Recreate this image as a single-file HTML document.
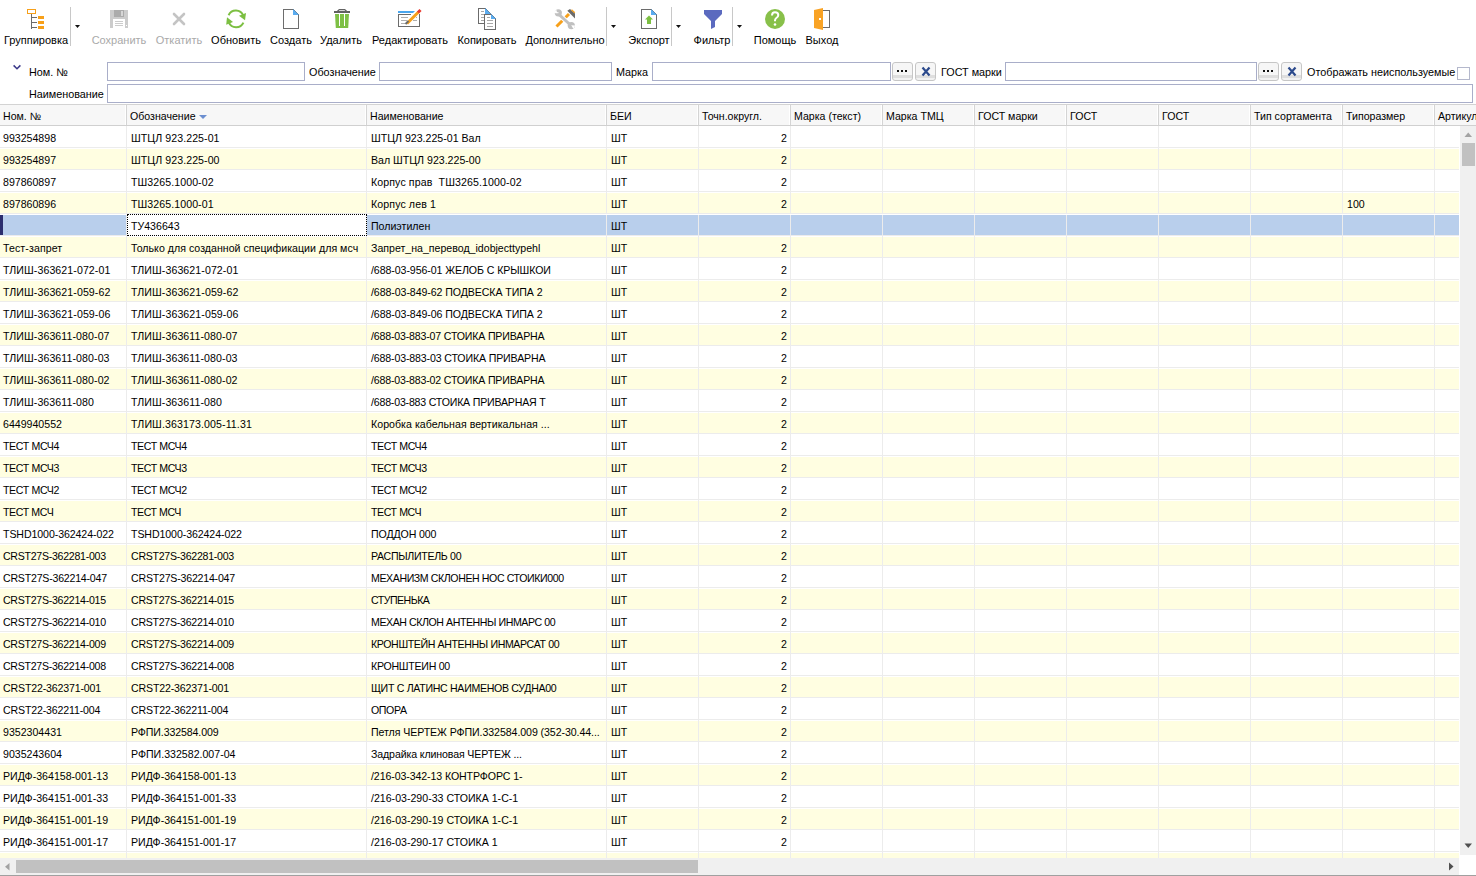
<!DOCTYPE html>
<html><head><meta charset="utf-8">
<style>
*{box-sizing:border-box;margin:0;padding:0}
html,body{width:1476px;height:876px;overflow:hidden;background:#fff}
body{position:relative;font-family:"Liberation Sans",sans-serif;font-size:10.6px;color:#000}
.abs{position:absolute}
.tl{position:absolute;top:34px;height:13px;line-height:13px;font-size:11px;text-align:center;white-space:nowrap;width:120px;color:#000}
.tl.dis{color:#a9a9a9}
.lbl{position:absolute;height:13px;line-height:13px;white-space:nowrap;font-size:10.8px}
.inp{position:absolute;border:1px solid #a9aec9;background:#fff;height:19px}
.btn{position:absolute;top:62px;height:19px;width:21px;border:1px solid #c6c6c6;border-radius:3px;background:linear-gradient(#f6f6f6 0,#f6f6f6 12px,#dedede 12px,#dedede 15px,#f2f2f2 15px)}
#grid{position:absolute;left:0;top:104px;width:1476px;height:754px;overflow:hidden}
.hdr{position:absolute;left:0;top:0;width:1476px;height:22px;background:#f7f7f7;border-top:1px solid #d3d3d3;border-bottom:1px solid #d0d0d0}
.hc{position:absolute;top:0;height:20px;line-height:22px;padding-left:3px;white-space:nowrap;overflow:hidden;border-right:1px solid #d4d4d4;box-shadow:inset -1px 0 0 #fff}
.sort{display:inline-block;width:0;height:0;border-left:4px solid transparent;border-right:4px solid transparent;border-top:4px solid #6c8fd0;margin-left:3px;vertical-align:1px}
.row{position:absolute;left:0;width:1459px;height:22px;background:#fff;border-bottom:1px solid #ececec}
.row.alt{background:#fffee1}
.row.alt .c{box-shadow:inset 0 1px 0 #fff}
.c{position:absolute;top:0;height:21px;line-height:25px;padding-left:3px;white-space:nowrap;overflow:hidden;border-right:1px solid #ececec}
.c.r{text-align:right;padding-right:3px;padding-left:0}
.row.sel{background:#fff}
.row.sel .c{background:#b9cfec;top:1px;height:20px;line-height:23px}
.row.sel .c:first-child{box-shadow:inset 3px 0 0 #2b2e6e}
.row.sel .c:nth-child(2){background:#fff;outline:1px dotted #000;outline-offset:-1px;top:0;height:22px;line-height:25px}
</style></head><body>

<!-- TOOLBAR ICONS -->
<svg class="abs" style="left:0;top:0" width="1476" height="56" viewBox="0 0 1476 56" shape-rendering="crispEdges">
 <!-- grouping -->
 <rect x="27.5" y="9.5" width="8" height="4" fill="none" stroke="#f7a01a"/>
 <path d="M31.5 14V29M31 17.5H37M31 22.5H37M31 27.5H37" stroke="#6b6b6b" fill="none"/>
 <rect x="38" y="16" width="6" height="3" fill="#f7a01a"/>
 <rect x="38" y="21" width="6" height="3" fill="#f7a01a"/>
 <rect x="38" y="26" width="6" height="3" fill="#f7a01a"/>
 <rect x="70" y="7" width="1" height="39" fill="#c8c8c8"/>
 <path d="M75 25H80L77.5 28Z" fill="#111" shape-rendering="auto"/>
 <!-- save (disabled) -->
 <path d="M110 10H127L128 11V28H110Z" fill="#cccccc"/>
 <rect x="114" y="10" width="10" height="7" fill="#ababab"/>
 <rect x="121" y="11" width="2" height="5" fill="#d6d6d6"/>
 <rect x="113" y="19" width="12" height="9" fill="#fff"/>
 <path d="M115 21.5H123M115 23.5H123M115 25.5H123" stroke="#cccccc"/>
 <rect x="126" y="25" width="1" height="1" fill="#fff"/>
 <!-- cancel (disabled) -->
 <path d="M174 14L184 24M184 14L174 24" stroke="#c4c4c4" stroke-width="2.6" stroke-linecap="round" shape-rendering="auto"/>
 <!-- refresh -->
 <g shape-rendering="auto" fill="#7cbf42">
  <path d="M228.6 15.2A8 8 0 0 1 243.25 15.6" fill="none" stroke="#7cbf42" stroke-width="2"/>
  <path d="M239 15.8L246 13L245 20.3Z"/>
  <path d="M243.4 22.6A8 8 0 0 1 228.75 22.4" fill="none" stroke="#7cbf42" stroke-width="2"/>
  <path d="M226.2 24.8L227 17.3L233 22Z"/>
 </g>
 <!-- new -->
 <path d="M283.5 28.5V9.5H293L298.5 15V28.5Z" fill="#fff" stroke="#6d6d6d"/>
 <path d="M293 9L299 15H293Z" fill="#5aacf0" shape-rendering="auto"/>
 <!-- trash -->
 <rect x="334" y="11" width="16" height="2" fill="#626262"/>
 <path d="M337.3 11.5L339.3 9.6H344.7L346.7 11.5" fill="none" stroke="#626262" stroke-width="1.3" shape-rendering="auto"/>
 <path d="M335 14H349L348.2 28H335.8Z" fill="#7ec045" shape-rendering="auto"/>
 <rect x="339" y="14" width="1" height="12" fill="#fff"/>
 <rect x="344" y="14" width="1" height="12" fill="#fff"/>
 <!-- edit -->
 <path d="M398 11H415L413 13H398Z" fill="#4aa6ee" shape-rendering="auto"/>
 <path d="M411 14.5H398.5V26.5H419.5V14" fill="none" stroke="#6b6b6b"/>
 <path d="M401 17.5H408M401 20.5H407M401 23.5H405M416 17.5H417M413 20.5H417" stroke="#b0b0b0"/>
 <g shape-rendering="auto">
  <path d="M407 23.5L418.5 12" stroke="#f7a01a" stroke-width="3"/>
  <path d="M418 12.5L420.5 10" stroke="#e8392f" stroke-width="3"/>
  <path d="M405.5 24L408.5 21" stroke="#6b6b6b" stroke-width="2"/>
 </g>
 <!-- copy -->
 <path d="M478.5 23.5V8.5H485L490.5 14V23.5Z" fill="#fff" stroke="#6b6b6b"/>
 <path d="M485 8L491 14H485Z" fill="#5aacf0" shape-rendering="auto"/>
 <path d="M481 11.5H484M481 14.5H484M481 17.5H484M481 20.5H484" stroke="#a8a8a8"/>
 <path d="M484.5 29.5V14.5H491L495.5 19V29.5Z" fill="#fff" stroke="#6b6b6b"/>
 <path d="M491 14L496 19H491Z" fill="#5aacf0" shape-rendering="auto"/>
 <path d="M487 17.5H490M487 20.5H493M487 23.5H493M487 26.5H493" stroke="#a8a8a8"/>
 <!-- tools -->
 <g shape-rendering="auto">
  <path d="M556.5 26.5L569 14" stroke="#f7a01a" stroke-width="3"/>
  <path d="M559 14.5L571 25.5" stroke="#fff" stroke-width="5"/>
  <path d="M559 14.5L571 25.5" stroke="#c0c0c0" stroke-width="3"/>
  <circle cx="558.3" cy="12.8" r="3.6" fill="#c0c0c0"/>
  <path d="M553.5 12.5L557.3 13.3L556.2 9.5Z" fill="#fff"/>
  <path d="M554 13.2H558.5V12.2H554Z" fill="#fff"/>
  <circle cx="571.3" cy="25.6" r="3.6" fill="#c0c0c0"/>
  <path d="M575.2 25.6L571.2 25.2L573.5 29Z" fill="#fff"/>
  <path d="M567.3 10.8L570 9L575 13.5L575 18.5Z" fill="#6b6b6b"/>
  <path d="M571.5 9.8L574.8 12.8" stroke="#f7a01a" stroke-width="1.2"/>
 </g>
 <rect x="606" y="7" width="1" height="39" fill="#c8c8c8"/>
 <path d="M611 25H616L613.5 28Z" fill="#111" shape-rendering="auto"/>
 <!-- export -->
 <path d="M641.5 28.5V9.5H651L656.5 15V28.5Z" fill="#fff" stroke="#6b6b6b"/>
 <path d="M651 9L657 15H651Z" fill="#5aacf0" shape-rendering="auto"/>
 <path d="M645 19.5L649 15.5L653 19.5H651V24H647V19.5Z" fill="#7cbf42" shape-rendering="auto"/>
 <rect x="671" y="7" width="1" height="39" fill="#c8c8c8"/>
 <path d="M676 25H681L678.5 28Z" fill="#111" shape-rendering="auto"/>
 <!-- filter -->
 <path d="M704 10H722V14L715 21V27L711 29V21L704 14Z" fill="#5b6abf" shape-rendering="auto"/>
 <rect x="732" y="7" width="1" height="39" fill="#c8c8c8"/>
 <path d="M737 25H742L739.5 28Z" fill="#111" shape-rendering="auto"/>
 <!-- help -->
 <g shape-rendering="auto">
  <circle cx="775" cy="19" r="10" fill="#88c04a"/>
  <path d="M772 15.5Q772 12.2 775 12.2Q778.3 12.2 778.3 15Q778.3 16.8 776.3 18Q775 18.8 775 20.5V21.2" fill="none" stroke="#fff" stroke-width="2"/>
  <circle cx="775" cy="24.5" r="1.3" fill="#fff"/>
 </g>
 <!-- exit -->
 <path d="M822 10.5H829.5V27.5H822" fill="none" stroke="#6b6b6b"/>
 <path d="M814 10L823 8V30L814 28Z" fill="#f9a325" shape-rendering="auto"/>
 <rect x="819" y="18" width="2" height="2" fill="#fff"/>
</svg>

<div class="tl" style="left:-24px">Группировка</div>
<div class="tl dis" style="left:59px">Сохранить</div>
<div class="tl dis" style="left:119px">Откатить</div>
<div class="tl" style="left:176px">Обновить</div>
<div class="tl" style="left:231px">Создать</div>
<div class="tl" style="left:281px">Удалить</div>
<div class="tl" style="left:350px">Редактировать</div>
<div class="tl" style="left:427px">Копировать</div>
<div class="tl" style="left:505px">Дополнительно</div>
<div class="tl" style="left:589px">Экспорт</div>
<div class="tl" style="left:652px">Фильтр</div>
<div class="tl" style="left:715px">Помощь</div>
<div class="tl" style="left:762px">Выход</div>

<!-- FILTER PANEL -->
<svg class="abs" style="left:12px;top:64px" width="11" height="8" viewBox="0 0 11 8"><path d="M1.6 1.4L5 4.8L8.4 1.4" fill="none" stroke="#3a3889" stroke-width="1.5"/></svg>
<div class="lbl" style="left:29px;top:66px">Ном. №</div>
<div class="inp" style="left:107px;top:62px;width:198px"></div>
<div class="lbl" style="left:309px;top:66px">Обозначение</div>
<div class="inp" style="left:379px;top:62px;width:233px"></div>
<div class="lbl" style="left:616px;top:66px">Марка</div>
<div class="inp" style="left:652px;top:62px;width:239px"></div>
<div class="btn" style="left:892px"></div>
<div class="btn" style="left:915px"></div>
<div class="lbl" style="left:941px;top:66px">ГОСТ марки</div>
<div class="inp" style="left:1005px;top:62px;width:252px"></div>
<div class="btn" style="left:1258px"></div>
<div class="btn" style="left:1281px"></div>
<div class="lbl" style="left:1307px;top:66px">Отображать неиспользуемые</div>
<div class="abs" style="left:1457px;top:67px;width:13px;height:13px;border:1px solid #b4b8cc;background:#fff"></div>
<div class="lbl" style="left:29px;top:88px">Наименование</div>
<div class="inp" style="left:107px;top:84px;width:1366px"></div>
<svg class="abs" style="left:0;top:60px" width="1476" height="24" viewBox="0 60 1476 24" shape-rendering="crispEdges">
 <rect x="897" y="70" width="2" height="2" fill="#111"/><rect x="901" y="70" width="2" height="2" fill="#111"/><rect x="905" y="70" width="2" height="2" fill="#111"/>
 <rect x="1263" y="70" width="2" height="2" fill="#111"/><rect x="1267" y="70" width="2" height="2" fill="#111"/><rect x="1271" y="70" width="2" height="2" fill="#111"/>
 <path d="M922.5 67.5L929.5 75.5M929.5 67.5L922.5 75.5" stroke="#2c4a8c" stroke-width="2.2" shape-rendering="auto"/>
 <path d="M1288.5 67.5L1295.5 75.5M1295.5 67.5L1288.5 75.5" stroke="#2c4a8c" stroke-width="2.2" shape-rendering="auto"/>
</svg>

<!-- GRID -->
<div id="grid">
<div class="hdr">
<div class="hc" style="left:0px;width:127px"><span>Ном. №</span></div>
<div class="hc" style="left:127px;width:240px"><span>Обозначение</span><span class="sort"></span></div>
<div class="hc" style="left:367px;width:240px"><span>Наименование</span></div>
<div class="hc" style="left:607px;width:92px"><span>БЕИ</span></div>
<div class="hc" style="left:699px;width:92px"><span>Точн.округл.</span></div>
<div class="hc" style="left:791px;width:92px"><span>Марка (текст)</span></div>
<div class="hc" style="left:883px;width:92px"><span>Марка ТМЦ</span></div>
<div class="hc" style="left:975px;width:92px"><span>ГОСТ марки</span></div>
<div class="hc" style="left:1067px;width:92px"><span>ГОСТ</span></div>
<div class="hc" style="left:1159px;width:92px"><span>ГОСТ</span></div>
<div class="hc" style="left:1251px;width:92px"><span>Тип сортамента</span></div>
<div class="hc" style="left:1343px;width:92px"><span>Типоразмер</span></div>
<div class="hc" style="left:1435px;width:92px"><span>Артикул</span></div>
</div>
<div id="rows" style="position:absolute;left:0;top:-104px">
<div class="row" style="top:126px">
<div class="c" style="left:0px;width:127px;padding-left:3px">993254898</div>
<div class="c" style="left:127px;width:240px;padding-left:4px;letter-spacing:0.071px">ШТЦЛ 923.225-01</div>
<div class="c" style="left:367px;width:240px;padding-left:4px">ШТЦЛ 923.225-01 Вал</div>
<div class="c" style="left:607px;width:92px;padding-left:4px">ШТ</div>
<div class="c r" style="left:699px;width:92px;padding-left:4px">2</div>
<div class="c" style="left:791px;width:92px;padding-left:4px"></div>
<div class="c" style="left:883px;width:92px;padding-left:4px"></div>
<div class="c" style="left:975px;width:92px;padding-left:4px"></div>
<div class="c" style="left:1067px;width:92px;padding-left:4px"></div>
<div class="c" style="left:1159px;width:92px;padding-left:4px"></div>
<div class="c" style="left:1251px;width:92px;padding-left:4px"></div>
<div class="c" style="left:1343px;width:92px;padding-left:4px"></div>
<div class="c" style="left:1435px;width:24px;padding-left:4px;border-right:0"></div>
</div>
<div class="row alt" style="top:148px">
<div class="c" style="left:0px;width:127px;padding-left:3px">993254897</div>
<div class="c" style="left:127px;width:240px;padding-left:4px;letter-spacing:0.071px">ШТЦЛ 923.225-00</div>
<div class="c" style="left:367px;width:240px;padding-left:4px">Вал ШТЦЛ 923.225-00</div>
<div class="c" style="left:607px;width:92px;padding-left:4px">ШТ</div>
<div class="c r" style="left:699px;width:92px;padding-left:4px">2</div>
<div class="c" style="left:791px;width:92px;padding-left:4px"></div>
<div class="c" style="left:883px;width:92px;padding-left:4px"></div>
<div class="c" style="left:975px;width:92px;padding-left:4px"></div>
<div class="c" style="left:1067px;width:92px;padding-left:4px"></div>
<div class="c" style="left:1159px;width:92px;padding-left:4px"></div>
<div class="c" style="left:1251px;width:92px;padding-left:4px"></div>
<div class="c" style="left:1343px;width:92px;padding-left:4px"></div>
<div class="c" style="left:1435px;width:24px;padding-left:4px;border-right:0"></div>
</div>
<div class="row" style="top:170px">
<div class="c" style="left:0px;width:127px;padding-left:3px">897860897</div>
<div class="c" style="left:127px;width:240px;padding-left:4px;letter-spacing:0.077px">ТШ3265.1000-02</div>
<div class="c" style="left:367px;width:240px;padding-left:4px;letter-spacing:0.108px">Корпус прав&nbsp; ТШ3265.1000-02</div>
<div class="c" style="left:607px;width:92px;padding-left:4px">ШТ</div>
<div class="c r" style="left:699px;width:92px;padding-left:4px">2</div>
<div class="c" style="left:791px;width:92px;padding-left:4px"></div>
<div class="c" style="left:883px;width:92px;padding-left:4px"></div>
<div class="c" style="left:975px;width:92px;padding-left:4px"></div>
<div class="c" style="left:1067px;width:92px;padding-left:4px"></div>
<div class="c" style="left:1159px;width:92px;padding-left:4px"></div>
<div class="c" style="left:1251px;width:92px;padding-left:4px"></div>
<div class="c" style="left:1343px;width:92px;padding-left:4px"></div>
<div class="c" style="left:1435px;width:24px;padding-left:4px;border-right:0"></div>
</div>
<div class="row alt" style="top:192px">
<div class="c" style="left:0px;width:127px;padding-left:3px">897860896</div>
<div class="c" style="left:127px;width:240px;padding-left:4px;letter-spacing:0.077px">ТШ3265.1000-01</div>
<div class="c" style="left:367px;width:240px;padding-left:4px;letter-spacing:0.109px">Корпус лев 1</div>
<div class="c" style="left:607px;width:92px;padding-left:4px">ШТ</div>
<div class="c r" style="left:699px;width:92px;padding-left:4px">2</div>
<div class="c" style="left:791px;width:92px;padding-left:4px"></div>
<div class="c" style="left:883px;width:92px;padding-left:4px"></div>
<div class="c" style="left:975px;width:92px;padding-left:4px"></div>
<div class="c" style="left:1067px;width:92px;padding-left:4px"></div>
<div class="c" style="left:1159px;width:92px;padding-left:4px"></div>
<div class="c" style="left:1251px;width:92px;padding-left:4px"></div>
<div class="c" style="left:1343px;width:92px;padding-left:4px">100</div>
<div class="c" style="left:1435px;width:24px;padding-left:4px;border-right:0"></div>
</div>
<div class="row sel" style="top:214px">
<div class="c" style="left:0px;width:127px;padding-left:3px"></div>
<div class="c" style="left:127px;width:240px;padding-left:4px">ТУ436643</div>
<div class="c" style="left:367px;width:240px;padding-left:4px">Полиэтилен</div>
<div class="c" style="left:607px;width:92px;padding-left:4px">ШТ</div>
<div class="c r" style="left:699px;width:92px;padding-left:4px"></div>
<div class="c" style="left:791px;width:92px;padding-left:4px"></div>
<div class="c" style="left:883px;width:92px;padding-left:4px"></div>
<div class="c" style="left:975px;width:92px;padding-left:4px"></div>
<div class="c" style="left:1067px;width:92px;padding-left:4px"></div>
<div class="c" style="left:1159px;width:92px;padding-left:4px"></div>
<div class="c" style="left:1251px;width:92px;padding-left:4px"></div>
<div class="c" style="left:1343px;width:92px;padding-left:4px"></div>
<div class="c" style="left:1435px;width:24px;padding-left:4px;border-right:0"></div>
</div>
<div class="row alt" style="top:236px">
<div class="c" style="left:0px;width:127px;padding-left:3px;letter-spacing:0.1px">Тест-запрет</div>
<div class="c" style="left:127px;width:240px;padding-left:4px;letter-spacing:0.025px">Только для созданной спецификации для мсч</div>
<div class="c" style="left:367px;width:240px;padding-left:4px">Запрет_на_перевод_idobjecttypehl</div>
<div class="c" style="left:607px;width:92px;padding-left:4px">ШТ</div>
<div class="c r" style="left:699px;width:92px;padding-left:4px">2</div>
<div class="c" style="left:791px;width:92px;padding-left:4px"></div>
<div class="c" style="left:883px;width:92px;padding-left:4px"></div>
<div class="c" style="left:975px;width:92px;padding-left:4px"></div>
<div class="c" style="left:1067px;width:92px;padding-left:4px"></div>
<div class="c" style="left:1159px;width:92px;padding-left:4px"></div>
<div class="c" style="left:1251px;width:92px;padding-left:4px"></div>
<div class="c" style="left:1343px;width:92px;padding-left:4px"></div>
<div class="c" style="left:1435px;width:24px;padding-left:4px;border-right:0"></div>
</div>
<div class="row" style="top:258px">
<div class="c" style="left:0px;width:127px;padding-left:3px;letter-spacing:0.082px">ТЛИШ-363621-072-01</div>
<div class="c" style="left:127px;width:240px;padding-left:4px;letter-spacing:0.082px">ТЛИШ-363621-072-01</div>
<div class="c" style="left:367px;width:240px;padding-left:4px;letter-spacing:-0.076px">/688-03-956-01 ЖЕЛОБ С КРЫШКОИ</div>
<div class="c" style="left:607px;width:92px;padding-left:4px">ШТ</div>
<div class="c r" style="left:699px;width:92px;padding-left:4px">2</div>
<div class="c" style="left:791px;width:92px;padding-left:4px"></div>
<div class="c" style="left:883px;width:92px;padding-left:4px"></div>
<div class="c" style="left:975px;width:92px;padding-left:4px"></div>
<div class="c" style="left:1067px;width:92px;padding-left:4px"></div>
<div class="c" style="left:1159px;width:92px;padding-left:4px"></div>
<div class="c" style="left:1251px;width:92px;padding-left:4px"></div>
<div class="c" style="left:1343px;width:92px;padding-left:4px"></div>
<div class="c" style="left:1435px;width:24px;padding-left:4px;border-right:0"></div>
</div>
<div class="row alt" style="top:280px">
<div class="c" style="left:0px;width:127px;padding-left:3px;letter-spacing:0.082px">ТЛИШ-363621-059-62</div>
<div class="c" style="left:127px;width:240px;padding-left:4px;letter-spacing:0.082px">ТЛИШ-363621-059-62</div>
<div class="c" style="left:367px;width:240px;padding-left:4px;letter-spacing:-0.076px">/688-03-849-62 ПОДВЕСКА ТИПА 2</div>
<div class="c" style="left:607px;width:92px;padding-left:4px">ШТ</div>
<div class="c r" style="left:699px;width:92px;padding-left:4px">2</div>
<div class="c" style="left:791px;width:92px;padding-left:4px"></div>
<div class="c" style="left:883px;width:92px;padding-left:4px"></div>
<div class="c" style="left:975px;width:92px;padding-left:4px"></div>
<div class="c" style="left:1067px;width:92px;padding-left:4px"></div>
<div class="c" style="left:1159px;width:92px;padding-left:4px"></div>
<div class="c" style="left:1251px;width:92px;padding-left:4px"></div>
<div class="c" style="left:1343px;width:92px;padding-left:4px"></div>
<div class="c" style="left:1435px;width:24px;padding-left:4px;border-right:0"></div>
</div>
<div class="row" style="top:302px">
<div class="c" style="left:0px;width:127px;padding-left:3px;letter-spacing:0.082px">ТЛИШ-363621-059-06</div>
<div class="c" style="left:127px;width:240px;padding-left:4px;letter-spacing:0.082px">ТЛИШ-363621-059-06</div>
<div class="c" style="left:367px;width:240px;padding-left:4px;letter-spacing:-0.076px">/688-03-849-06 ПОДВЕСКА ТИПА 2</div>
<div class="c" style="left:607px;width:92px;padding-left:4px">ШТ</div>
<div class="c r" style="left:699px;width:92px;padding-left:4px">2</div>
<div class="c" style="left:791px;width:92px;padding-left:4px"></div>
<div class="c" style="left:883px;width:92px;padding-left:4px"></div>
<div class="c" style="left:975px;width:92px;padding-left:4px"></div>
<div class="c" style="left:1067px;width:92px;padding-left:4px"></div>
<div class="c" style="left:1159px;width:92px;padding-left:4px"></div>
<div class="c" style="left:1251px;width:92px;padding-left:4px"></div>
<div class="c" style="left:1343px;width:92px;padding-left:4px"></div>
<div class="c" style="left:1435px;width:24px;padding-left:4px;border-right:0"></div>
</div>
<div class="row alt" style="top:324px">
<div class="c" style="left:0px;width:127px;padding-left:3px;letter-spacing:0.082px">ТЛИШ-363611-080-07</div>
<div class="c" style="left:127px;width:240px;padding-left:4px;letter-spacing:0.082px">ТЛИШ-363611-080-07</div>
<div class="c" style="left:367px;width:240px;padding-left:4px;letter-spacing:-0.172px">/688-03-883-07 СТОИКА ПРИВАРНА</div>
<div class="c" style="left:607px;width:92px;padding-left:4px">ШТ</div>
<div class="c r" style="left:699px;width:92px;padding-left:4px">2</div>
<div class="c" style="left:791px;width:92px;padding-left:4px"></div>
<div class="c" style="left:883px;width:92px;padding-left:4px"></div>
<div class="c" style="left:975px;width:92px;padding-left:4px"></div>
<div class="c" style="left:1067px;width:92px;padding-left:4px"></div>
<div class="c" style="left:1159px;width:92px;padding-left:4px"></div>
<div class="c" style="left:1251px;width:92px;padding-left:4px"></div>
<div class="c" style="left:1343px;width:92px;padding-left:4px"></div>
<div class="c" style="left:1435px;width:24px;padding-left:4px;border-right:0"></div>
</div>
<div class="row" style="top:346px">
<div class="c" style="left:0px;width:127px;padding-left:3px;letter-spacing:0.082px">ТЛИШ-363611-080-03</div>
<div class="c" style="left:127px;width:240px;padding-left:4px;letter-spacing:0.082px">ТЛИШ-363611-080-03</div>
<div class="c" style="left:367px;width:240px;padding-left:4px;letter-spacing:-0.138px">/688-03-883-03 СТОИКА ПРИВАРНА</div>
<div class="c" style="left:607px;width:92px;padding-left:4px">ШТ</div>
<div class="c r" style="left:699px;width:92px;padding-left:4px">2</div>
<div class="c" style="left:791px;width:92px;padding-left:4px"></div>
<div class="c" style="left:883px;width:92px;padding-left:4px"></div>
<div class="c" style="left:975px;width:92px;padding-left:4px"></div>
<div class="c" style="left:1067px;width:92px;padding-left:4px"></div>
<div class="c" style="left:1159px;width:92px;padding-left:4px"></div>
<div class="c" style="left:1251px;width:92px;padding-left:4px"></div>
<div class="c" style="left:1343px;width:92px;padding-left:4px"></div>
<div class="c" style="left:1435px;width:24px;padding-left:4px;border-right:0"></div>
</div>
<div class="row alt" style="top:368px">
<div class="c" style="left:0px;width:127px;padding-left:3px;letter-spacing:0.082px">ТЛИШ-363611-080-02</div>
<div class="c" style="left:127px;width:240px;padding-left:4px;letter-spacing:0.082px">ТЛИШ-363611-080-02</div>
<div class="c" style="left:367px;width:240px;padding-left:4px;letter-spacing:-0.172px">/688-03-883-02 СТОИКА ПРИВАРНА</div>
<div class="c" style="left:607px;width:92px;padding-left:4px">ШТ</div>
<div class="c r" style="left:699px;width:92px;padding-left:4px">2</div>
<div class="c" style="left:791px;width:92px;padding-left:4px"></div>
<div class="c" style="left:883px;width:92px;padding-left:4px"></div>
<div class="c" style="left:975px;width:92px;padding-left:4px"></div>
<div class="c" style="left:1067px;width:92px;padding-left:4px"></div>
<div class="c" style="left:1159px;width:92px;padding-left:4px"></div>
<div class="c" style="left:1251px;width:92px;padding-left:4px"></div>
<div class="c" style="left:1343px;width:92px;padding-left:4px"></div>
<div class="c" style="left:1435px;width:24px;padding-left:4px;border-right:0"></div>
</div>
<div class="row" style="top:390px">
<div class="c" style="left:0px;width:127px;padding-left:3px;letter-spacing:0.071px">ТЛИШ-363611-080</div>
<div class="c" style="left:127px;width:240px;padding-left:4px;letter-spacing:0.071px">ТЛИШ-363611-080</div>
<div class="c" style="left:367px;width:240px;padding-left:4px;letter-spacing:-0.193px">/688-03-883 СТОИКА ПРИВАРНАЯ Т</div>
<div class="c" style="left:607px;width:92px;padding-left:4px">ШТ</div>
<div class="c r" style="left:699px;width:92px;padding-left:4px">2</div>
<div class="c" style="left:791px;width:92px;padding-left:4px"></div>
<div class="c" style="left:883px;width:92px;padding-left:4px"></div>
<div class="c" style="left:975px;width:92px;padding-left:4px"></div>
<div class="c" style="left:1067px;width:92px;padding-left:4px"></div>
<div class="c" style="left:1159px;width:92px;padding-left:4px"></div>
<div class="c" style="left:1251px;width:92px;padding-left:4px"></div>
<div class="c" style="left:1343px;width:92px;padding-left:4px"></div>
<div class="c" style="left:1435px;width:24px;padding-left:4px;border-right:0"></div>
</div>
<div class="row alt" style="top:412px">
<div class="c" style="left:0px;width:127px;padding-left:3px">6449940552</div>
<div class="c" style="left:127px;width:240px;padding-left:4px;letter-spacing:0.105px">ТЛИШ.363173.005-11.31</div>
<div class="c" style="left:367px;width:240px;padding-left:4px;letter-spacing:0.036px">Коробка кабельная вертикальная ...</div>
<div class="c" style="left:607px;width:92px;padding-left:4px">ШТ</div>
<div class="c r" style="left:699px;width:92px;padding-left:4px">2</div>
<div class="c" style="left:791px;width:92px;padding-left:4px"></div>
<div class="c" style="left:883px;width:92px;padding-left:4px"></div>
<div class="c" style="left:975px;width:92px;padding-left:4px"></div>
<div class="c" style="left:1067px;width:92px;padding-left:4px"></div>
<div class="c" style="left:1159px;width:92px;padding-left:4px"></div>
<div class="c" style="left:1251px;width:92px;padding-left:4px"></div>
<div class="c" style="left:1343px;width:92px;padding-left:4px"></div>
<div class="c" style="left:1435px;width:24px;padding-left:4px;border-right:0"></div>
</div>
<div class="row" style="top:434px">
<div class="c" style="left:0px;width:127px;padding-left:3px;letter-spacing:-0.362px">ТЕСТ МСЧ4</div>
<div class="c" style="left:127px;width:240px;padding-left:4px;letter-spacing:-0.4px">ТЕСТ МСЧ4</div>
<div class="c" style="left:367px;width:240px;padding-left:4px;letter-spacing:-0.4px">ТЕСТ МСЧ4</div>
<div class="c" style="left:607px;width:92px;padding-left:4px">ШТ</div>
<div class="c r" style="left:699px;width:92px;padding-left:4px">2</div>
<div class="c" style="left:791px;width:92px;padding-left:4px"></div>
<div class="c" style="left:883px;width:92px;padding-left:4px"></div>
<div class="c" style="left:975px;width:92px;padding-left:4px"></div>
<div class="c" style="left:1067px;width:92px;padding-left:4px"></div>
<div class="c" style="left:1159px;width:92px;padding-left:4px"></div>
<div class="c" style="left:1251px;width:92px;padding-left:4px"></div>
<div class="c" style="left:1343px;width:92px;padding-left:4px"></div>
<div class="c" style="left:1435px;width:24px;padding-left:4px;border-right:0"></div>
</div>
<div class="row alt" style="top:456px">
<div class="c" style="left:0px;width:127px;padding-left:3px;letter-spacing:-0.362px">ТЕСТ МСЧ3</div>
<div class="c" style="left:127px;width:240px;padding-left:4px;letter-spacing:-0.4px">ТЕСТ МСЧ3</div>
<div class="c" style="left:367px;width:240px;padding-left:4px;letter-spacing:-0.4px">ТЕСТ МСЧ3</div>
<div class="c" style="left:607px;width:92px;padding-left:4px">ШТ</div>
<div class="c r" style="left:699px;width:92px;padding-left:4px">2</div>
<div class="c" style="left:791px;width:92px;padding-left:4px"></div>
<div class="c" style="left:883px;width:92px;padding-left:4px"></div>
<div class="c" style="left:975px;width:92px;padding-left:4px"></div>
<div class="c" style="left:1067px;width:92px;padding-left:4px"></div>
<div class="c" style="left:1159px;width:92px;padding-left:4px"></div>
<div class="c" style="left:1251px;width:92px;padding-left:4px"></div>
<div class="c" style="left:1343px;width:92px;padding-left:4px"></div>
<div class="c" style="left:1435px;width:24px;padding-left:4px;border-right:0"></div>
</div>
<div class="row" style="top:478px">
<div class="c" style="left:0px;width:127px;padding-left:3px;letter-spacing:-0.362px">ТЕСТ МСЧ2</div>
<div class="c" style="left:127px;width:240px;padding-left:4px;letter-spacing:-0.4px">ТЕСТ МСЧ2</div>
<div class="c" style="left:367px;width:240px;padding-left:4px;letter-spacing:-0.4px">ТЕСТ МСЧ2</div>
<div class="c" style="left:607px;width:92px;padding-left:4px">ШТ</div>
<div class="c r" style="left:699px;width:92px;padding-left:4px">2</div>
<div class="c" style="left:791px;width:92px;padding-left:4px"></div>
<div class="c" style="left:883px;width:92px;padding-left:4px"></div>
<div class="c" style="left:975px;width:92px;padding-left:4px"></div>
<div class="c" style="left:1067px;width:92px;padding-left:4px"></div>
<div class="c" style="left:1159px;width:92px;padding-left:4px"></div>
<div class="c" style="left:1251px;width:92px;padding-left:4px"></div>
<div class="c" style="left:1343px;width:92px;padding-left:4px"></div>
<div class="c" style="left:1435px;width:24px;padding-left:4px;border-right:0"></div>
</div>
<div class="row alt" style="top:500px">
<div class="c" style="left:0px;width:127px;padding-left:3px;letter-spacing:-0.386px">ТЕСТ МСЧ</div>
<div class="c" style="left:127px;width:240px;padding-left:4px;letter-spacing:-0.429px">ТЕСТ МСЧ</div>
<div class="c" style="left:367px;width:240px;padding-left:4px;letter-spacing:-0.414px">ТЕСТ МСЧ</div>
<div class="c" style="left:607px;width:92px;padding-left:4px">ШТ</div>
<div class="c r" style="left:699px;width:92px;padding-left:4px">2</div>
<div class="c" style="left:791px;width:92px;padding-left:4px"></div>
<div class="c" style="left:883px;width:92px;padding-left:4px"></div>
<div class="c" style="left:975px;width:92px;padding-left:4px"></div>
<div class="c" style="left:1067px;width:92px;padding-left:4px"></div>
<div class="c" style="left:1159px;width:92px;padding-left:4px"></div>
<div class="c" style="left:1251px;width:92px;padding-left:4px"></div>
<div class="c" style="left:1343px;width:92px;padding-left:4px"></div>
<div class="c" style="left:1435px;width:24px;padding-left:4px;border-right:0"></div>
</div>
<div class="row" style="top:522px">
<div class="c" style="left:0px;width:127px;padding-left:3px;letter-spacing:-0.089px">TSHD1000-362424-022</div>
<div class="c" style="left:127px;width:240px;padding-left:4px;letter-spacing:-0.089px">TSHD1000-362424-022</div>
<div class="c" style="left:367px;width:240px;padding-left:4px;letter-spacing:-0.111px">ПОДДОН 000</div>
<div class="c" style="left:607px;width:92px;padding-left:4px">ШТ</div>
<div class="c r" style="left:699px;width:92px;padding-left:4px">2</div>
<div class="c" style="left:791px;width:92px;padding-left:4px"></div>
<div class="c" style="left:883px;width:92px;padding-left:4px"></div>
<div class="c" style="left:975px;width:92px;padding-left:4px"></div>
<div class="c" style="left:1067px;width:92px;padding-left:4px"></div>
<div class="c" style="left:1159px;width:92px;padding-left:4px"></div>
<div class="c" style="left:1251px;width:92px;padding-left:4px"></div>
<div class="c" style="left:1343px;width:92px;padding-left:4px"></div>
<div class="c" style="left:1435px;width:24px;padding-left:4px;border-right:0"></div>
</div>
<div class="row alt" style="top:544px">
<div class="c" style="left:0px;width:127px;padding-left:3px;letter-spacing:-0.276px">CRST27S-362281-003</div>
<div class="c" style="left:127px;width:240px;padding-left:4px;letter-spacing:-0.271px">CRST27S-362281-003</div>
<div class="c" style="left:367px;width:240px;padding-left:4px;letter-spacing:-0.308px">РАСПЫЛИТЕЛЬ 00</div>
<div class="c" style="left:607px;width:92px;padding-left:4px">ШТ</div>
<div class="c r" style="left:699px;width:92px;padding-left:4px">2</div>
<div class="c" style="left:791px;width:92px;padding-left:4px"></div>
<div class="c" style="left:883px;width:92px;padding-left:4px"></div>
<div class="c" style="left:975px;width:92px;padding-left:4px"></div>
<div class="c" style="left:1067px;width:92px;padding-left:4px"></div>
<div class="c" style="left:1159px;width:92px;padding-left:4px"></div>
<div class="c" style="left:1251px;width:92px;padding-left:4px"></div>
<div class="c" style="left:1343px;width:92px;padding-left:4px"></div>
<div class="c" style="left:1435px;width:24px;padding-left:4px;border-right:0"></div>
</div>
<div class="row" style="top:566px">
<div class="c" style="left:0px;width:127px;padding-left:3px;letter-spacing:-0.218px">CRST27S-362214-047</div>
<div class="c" style="left:127px;width:240px;padding-left:4px;letter-spacing:-0.212px">CRST27S-362214-047</div>
<div class="c" style="left:367px;width:240px;padding-left:4px;letter-spacing:-0.407px">МЕХАНИЗМ СКЛОНЕН НОС СТОИКИ000</div>
<div class="c" style="left:607px;width:92px;padding-left:4px">ШТ</div>
<div class="c r" style="left:699px;width:92px;padding-left:4px">2</div>
<div class="c" style="left:791px;width:92px;padding-left:4px"></div>
<div class="c" style="left:883px;width:92px;padding-left:4px"></div>
<div class="c" style="left:975px;width:92px;padding-left:4px"></div>
<div class="c" style="left:1067px;width:92px;padding-left:4px"></div>
<div class="c" style="left:1159px;width:92px;padding-left:4px"></div>
<div class="c" style="left:1251px;width:92px;padding-left:4px"></div>
<div class="c" style="left:1343px;width:92px;padding-left:4px"></div>
<div class="c" style="left:1435px;width:24px;padding-left:4px;border-right:0"></div>
</div>
<div class="row alt" style="top:588px">
<div class="c" style="left:0px;width:127px;padding-left:3px;letter-spacing:-0.276px">CRST27S-362214-015</div>
<div class="c" style="left:127px;width:240px;padding-left:4px;letter-spacing:-0.271px">CRST27S-362214-015</div>
<div class="c" style="left:367px;width:240px;padding-left:4px;letter-spacing:-0.513px">СТУПЕНЬКА</div>
<div class="c" style="left:607px;width:92px;padding-left:4px">ШТ</div>
<div class="c r" style="left:699px;width:92px;padding-left:4px">2</div>
<div class="c" style="left:791px;width:92px;padding-left:4px"></div>
<div class="c" style="left:883px;width:92px;padding-left:4px"></div>
<div class="c" style="left:975px;width:92px;padding-left:4px"></div>
<div class="c" style="left:1067px;width:92px;padding-left:4px"></div>
<div class="c" style="left:1159px;width:92px;padding-left:4px"></div>
<div class="c" style="left:1251px;width:92px;padding-left:4px"></div>
<div class="c" style="left:1343px;width:92px;padding-left:4px"></div>
<div class="c" style="left:1435px;width:24px;padding-left:4px;border-right:0"></div>
</div>
<div class="row" style="top:610px">
<div class="c" style="left:0px;width:127px;padding-left:3px;letter-spacing:-0.276px">CRST27S-362214-010</div>
<div class="c" style="left:127px;width:240px;padding-left:4px;letter-spacing:-0.271px">CRST27S-362214-010</div>
<div class="c" style="left:367px;width:240px;padding-left:4px;letter-spacing:-0.429px">МЕХАН СКЛОН АНТЕННЫ ИНМАРС 00</div>
<div class="c" style="left:607px;width:92px;padding-left:4px">ШТ</div>
<div class="c r" style="left:699px;width:92px;padding-left:4px">2</div>
<div class="c" style="left:791px;width:92px;padding-left:4px"></div>
<div class="c" style="left:883px;width:92px;padding-left:4px"></div>
<div class="c" style="left:975px;width:92px;padding-left:4px"></div>
<div class="c" style="left:1067px;width:92px;padding-left:4px"></div>
<div class="c" style="left:1159px;width:92px;padding-left:4px"></div>
<div class="c" style="left:1251px;width:92px;padding-left:4px"></div>
<div class="c" style="left:1343px;width:92px;padding-left:4px"></div>
<div class="c" style="left:1435px;width:24px;padding-left:4px;border-right:0"></div>
</div>
<div class="row alt" style="top:632px">
<div class="c" style="left:0px;width:127px;padding-left:3px;letter-spacing:-0.276px">CRST27S-362214-009</div>
<div class="c" style="left:127px;width:240px;padding-left:4px;letter-spacing:-0.271px">CRST27S-362214-009</div>
<div class="c" style="left:367px;width:240px;padding-left:4px;letter-spacing:-0.379px">КРОНШТЕЙН АНТЕННЫ ИНМАРСАТ 00</div>
<div class="c" style="left:607px;width:92px;padding-left:4px">ШТ</div>
<div class="c r" style="left:699px;width:92px;padding-left:4px">2</div>
<div class="c" style="left:791px;width:92px;padding-left:4px"></div>
<div class="c" style="left:883px;width:92px;padding-left:4px"></div>
<div class="c" style="left:975px;width:92px;padding-left:4px"></div>
<div class="c" style="left:1067px;width:92px;padding-left:4px"></div>
<div class="c" style="left:1159px;width:92px;padding-left:4px"></div>
<div class="c" style="left:1251px;width:92px;padding-left:4px"></div>
<div class="c" style="left:1343px;width:92px;padding-left:4px"></div>
<div class="c" style="left:1435px;width:24px;padding-left:4px;border-right:0"></div>
</div>
<div class="row" style="top:654px">
<div class="c" style="left:0px;width:127px;padding-left:3px;letter-spacing:-0.276px">CRST27S-362214-008</div>
<div class="c" style="left:127px;width:240px;padding-left:4px;letter-spacing:-0.271px">CRST27S-362214-008</div>
<div class="c" style="left:367px;width:240px;padding-left:4px;letter-spacing:-0.264px">КРОНШТЕИН 00</div>
<div class="c" style="left:607px;width:92px;padding-left:4px">ШТ</div>
<div class="c r" style="left:699px;width:92px;padding-left:4px">2</div>
<div class="c" style="left:791px;width:92px;padding-left:4px"></div>
<div class="c" style="left:883px;width:92px;padding-left:4px"></div>
<div class="c" style="left:975px;width:92px;padding-left:4px"></div>
<div class="c" style="left:1067px;width:92px;padding-left:4px"></div>
<div class="c" style="left:1159px;width:92px;padding-left:4px"></div>
<div class="c" style="left:1251px;width:92px;padding-left:4px"></div>
<div class="c" style="left:1343px;width:92px;padding-left:4px"></div>
<div class="c" style="left:1435px;width:24px;padding-left:4px;border-right:0"></div>
</div>
<div class="row alt" style="top:676px">
<div class="c" style="left:0px;width:127px;padding-left:3px;letter-spacing:-0.156px">CRST22-362371-001</div>
<div class="c" style="left:127px;width:240px;padding-left:4px;letter-spacing:-0.162px">CRST22-362371-001</div>
<div class="c" style="left:367px;width:240px;padding-left:4px;letter-spacing:-0.311px">ЩИТ С ЛАТИНС НАИМЕНОВ СУДНА00</div>
<div class="c" style="left:607px;width:92px;padding-left:4px">ШТ</div>
<div class="c r" style="left:699px;width:92px;padding-left:4px">2</div>
<div class="c" style="left:791px;width:92px;padding-left:4px"></div>
<div class="c" style="left:883px;width:92px;padding-left:4px"></div>
<div class="c" style="left:975px;width:92px;padding-left:4px"></div>
<div class="c" style="left:1067px;width:92px;padding-left:4px"></div>
<div class="c" style="left:1159px;width:92px;padding-left:4px"></div>
<div class="c" style="left:1251px;width:92px;padding-left:4px"></div>
<div class="c" style="left:1343px;width:92px;padding-left:4px"></div>
<div class="c" style="left:1435px;width:24px;padding-left:4px;border-right:0"></div>
</div>
<div class="row" style="top:698px">
<div class="c" style="left:0px;width:127px;padding-left:3px;letter-spacing:-0.156px">CRST22-362211-004</div>
<div class="c" style="left:127px;width:240px;padding-left:4px;letter-spacing:-0.162px">CRST22-362211-004</div>
<div class="c" style="left:367px;width:240px;padding-left:4px;letter-spacing:-0.375px">ОПОРА</div>
<div class="c" style="left:607px;width:92px;padding-left:4px">ШТ</div>
<div class="c r" style="left:699px;width:92px;padding-left:4px">2</div>
<div class="c" style="left:791px;width:92px;padding-left:4px"></div>
<div class="c" style="left:883px;width:92px;padding-left:4px"></div>
<div class="c" style="left:975px;width:92px;padding-left:4px"></div>
<div class="c" style="left:1067px;width:92px;padding-left:4px"></div>
<div class="c" style="left:1159px;width:92px;padding-left:4px"></div>
<div class="c" style="left:1251px;width:92px;padding-left:4px"></div>
<div class="c" style="left:1343px;width:92px;padding-left:4px"></div>
<div class="c" style="left:1435px;width:24px;padding-left:4px;border-right:0"></div>
</div>
<div class="row alt" style="top:720px">
<div class="c" style="left:0px;width:127px;padding-left:3px">9352304431</div>
<div class="c" style="left:127px;width:240px;padding-left:4px;letter-spacing:-0.107px">РФПИ.332584.009</div>
<div class="c" style="left:367px;width:240px;padding-left:4px;letter-spacing:-0.073px">Петля ЧЕРТЕЖ РФПИ.332584.009 (352-30.44...</div>
<div class="c" style="left:607px;width:92px;padding-left:4px">ШТ</div>
<div class="c r" style="left:699px;width:92px;padding-left:4px">2</div>
<div class="c" style="left:791px;width:92px;padding-left:4px"></div>
<div class="c" style="left:883px;width:92px;padding-left:4px"></div>
<div class="c" style="left:975px;width:92px;padding-left:4px"></div>
<div class="c" style="left:1067px;width:92px;padding-left:4px"></div>
<div class="c" style="left:1159px;width:92px;padding-left:4px"></div>
<div class="c" style="left:1251px;width:92px;padding-left:4px"></div>
<div class="c" style="left:1343px;width:92px;padding-left:4px"></div>
<div class="c" style="left:1435px;width:24px;padding-left:4px;border-right:0"></div>
</div>
<div class="row" style="top:742px">
<div class="c" style="left:0px;width:127px;padding-left:3px">9035243604</div>
<div class="c" style="left:127px;width:240px;padding-left:4px">РФПИ.332582.007-04</div>
<div class="c" style="left:367px;width:240px;padding-left:4px;letter-spacing:-0.122px">Задрайка клиновая ЧЕРТЕЖ ...</div>
<div class="c" style="left:607px;width:92px;padding-left:4px">ШТ</div>
<div class="c r" style="left:699px;width:92px;padding-left:4px">2</div>
<div class="c" style="left:791px;width:92px;padding-left:4px"></div>
<div class="c" style="left:883px;width:92px;padding-left:4px"></div>
<div class="c" style="left:975px;width:92px;padding-left:4px"></div>
<div class="c" style="left:1067px;width:92px;padding-left:4px"></div>
<div class="c" style="left:1159px;width:92px;padding-left:4px"></div>
<div class="c" style="left:1251px;width:92px;padding-left:4px"></div>
<div class="c" style="left:1343px;width:92px;padding-left:4px"></div>
<div class="c" style="left:1435px;width:24px;padding-left:4px;border-right:0"></div>
</div>
<div class="row alt" style="top:764px">
<div class="c" style="left:0px;width:127px;padding-left:3px">РИДФ-364158-001-13</div>
<div class="c" style="left:127px;width:240px;padding-left:4px">РИДФ-364158-001-13</div>
<div class="c" style="left:367px;width:240px;padding-left:4px;letter-spacing:-0.096px">/216-03-342-13 КОНТРФОРС 1-</div>
<div class="c" style="left:607px;width:92px;padding-left:4px">ШТ</div>
<div class="c r" style="left:699px;width:92px;padding-left:4px">2</div>
<div class="c" style="left:791px;width:92px;padding-left:4px"></div>
<div class="c" style="left:883px;width:92px;padding-left:4px"></div>
<div class="c" style="left:975px;width:92px;padding-left:4px"></div>
<div class="c" style="left:1067px;width:92px;padding-left:4px"></div>
<div class="c" style="left:1159px;width:92px;padding-left:4px"></div>
<div class="c" style="left:1251px;width:92px;padding-left:4px"></div>
<div class="c" style="left:1343px;width:92px;padding-left:4px"></div>
<div class="c" style="left:1435px;width:24px;padding-left:4px;border-right:0"></div>
</div>
<div class="row" style="top:786px">
<div class="c" style="left:0px;width:127px;padding-left:3px">РИДФ-364151-001-33</div>
<div class="c" style="left:127px;width:240px;padding-left:4px">РИДФ-364151-001-33</div>
<div class="c" style="left:367px;width:240px;padding-left:4px">/216-03-290-33 СТОИКА 1-С-1</div>
<div class="c" style="left:607px;width:92px;padding-left:4px">ШТ</div>
<div class="c r" style="left:699px;width:92px;padding-left:4px">2</div>
<div class="c" style="left:791px;width:92px;padding-left:4px"></div>
<div class="c" style="left:883px;width:92px;padding-left:4px"></div>
<div class="c" style="left:975px;width:92px;padding-left:4px"></div>
<div class="c" style="left:1067px;width:92px;padding-left:4px"></div>
<div class="c" style="left:1159px;width:92px;padding-left:4px"></div>
<div class="c" style="left:1251px;width:92px;padding-left:4px"></div>
<div class="c" style="left:1343px;width:92px;padding-left:4px"></div>
<div class="c" style="left:1435px;width:24px;padding-left:4px;border-right:0"></div>
</div>
<div class="row alt" style="top:808px">
<div class="c" style="left:0px;width:127px;padding-left:3px">РИДФ-364151-001-19</div>
<div class="c" style="left:127px;width:240px;padding-left:4px">РИДФ-364151-001-19</div>
<div class="c" style="left:367px;width:240px;padding-left:4px">/216-03-290-19 СТОИКА 1-С-1</div>
<div class="c" style="left:607px;width:92px;padding-left:4px">ШТ</div>
<div class="c r" style="left:699px;width:92px;padding-left:4px">2</div>
<div class="c" style="left:791px;width:92px;padding-left:4px"></div>
<div class="c" style="left:883px;width:92px;padding-left:4px"></div>
<div class="c" style="left:975px;width:92px;padding-left:4px"></div>
<div class="c" style="left:1067px;width:92px;padding-left:4px"></div>
<div class="c" style="left:1159px;width:92px;padding-left:4px"></div>
<div class="c" style="left:1251px;width:92px;padding-left:4px"></div>
<div class="c" style="left:1343px;width:92px;padding-left:4px"></div>
<div class="c" style="left:1435px;width:24px;padding-left:4px;border-right:0"></div>
</div>
<div class="row" style="top:830px">
<div class="c" style="left:0px;width:127px;padding-left:3px">РИДФ-364151-001-17</div>
<div class="c" style="left:127px;width:240px;padding-left:4px">РИДФ-364151-001-17</div>
<div class="c" style="left:367px;width:240px;padding-left:4px">/216-03-290-17 СТОИКА 1</div>
<div class="c" style="left:607px;width:92px;padding-left:4px">ШТ</div>
<div class="c r" style="left:699px;width:92px;padding-left:4px">2</div>
<div class="c" style="left:791px;width:92px;padding-left:4px"></div>
<div class="c" style="left:883px;width:92px;padding-left:4px"></div>
<div class="c" style="left:975px;width:92px;padding-left:4px"></div>
<div class="c" style="left:1067px;width:92px;padding-left:4px"></div>
<div class="c" style="left:1159px;width:92px;padding-left:4px"></div>
<div class="c" style="left:1251px;width:92px;padding-left:4px"></div>
<div class="c" style="left:1343px;width:92px;padding-left:4px"></div>
<div class="c" style="left:1435px;width:24px;padding-left:4px;border-right:0"></div>
</div>
<div class="row alt" style="top:852px">
<div class="c" style="left:0px;width:127px;padding-left:3px"></div>
<div class="c" style="left:127px;width:240px;padding-left:4px"></div>
<div class="c" style="left:367px;width:240px;padding-left:4px"></div>
<div class="c" style="left:607px;width:92px;padding-left:4px"></div>
<div class="c r" style="left:699px;width:92px;padding-left:4px"></div>
<div class="c" style="left:791px;width:92px;padding-left:4px"></div>
<div class="c" style="left:883px;width:92px;padding-left:4px"></div>
<div class="c" style="left:975px;width:92px;padding-left:4px"></div>
<div class="c" style="left:1067px;width:92px;padding-left:4px"></div>
<div class="c" style="left:1159px;width:92px;padding-left:4px"></div>
<div class="c" style="left:1251px;width:92px;padding-left:4px"></div>
<div class="c" style="left:1343px;width:92px;padding-left:4px"></div>
<div class="c" style="left:1435px;width:24px;padding-left:4px;border-right:0"></div>
</div>
</div>
</div>

<!-- SCROLLBARS -->
<div class="abs" style="left:1460px;top:126px;width:16px;height:729px;background:#f0f0f0"></div>
<div class="abs" style="left:1462px;top:143px;width:13px;height:23px;background:#c1c1c1"></div>
<svg class="abs" style="left:1460px;top:126px" width="16" height="729" viewBox="0 0 16 729">
 <path d="M4.5 11H12L8.25 6.5Z" fill="#a3a3a3"/>
 <path d="M4.5 717.5H12L8.25 722Z" fill="#505050"/>
</svg>
<div class="abs" style="left:0;top:858px;width:1459px;height:17px;background:#f0f0f0"></div>
<div class="abs" style="left:16px;top:860px;width:682px;height:13px;background:#c1c1c1"></div>
<svg class="abs" style="left:0;top:858px" width="1460" height="17" viewBox="0 0 1460 17">
 <path d="M9.5 5V12.5L5 8.75Z" fill="#a3a3a3"/>
 <path d="M1449 4.5V12.5L1453.5 8.5Z" fill="#505050"/>
</svg>
<div class="abs" style="left:0;top:875px;width:1476px;height:1px;background:#a0a0a0"></div>
</body></html>
